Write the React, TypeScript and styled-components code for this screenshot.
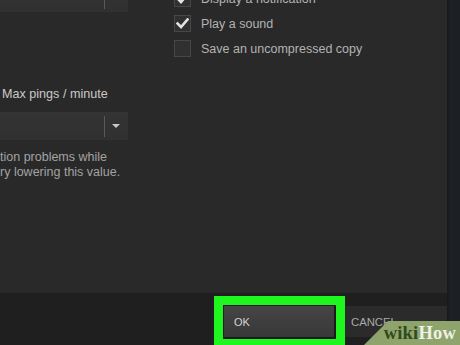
import React from "react";
import styled, { createGlobalStyle } from "styled-components";

const Global = createGlobalStyle`
  html, body { margin: 0; padding: 0; background: #1c1f22; }
  body { width: 460px; height: 345px; overflow: hidden; font-family: "Liberation Sans", Arial, sans-serif; }
`;

const Page = styled.div`
  position: relative;
  display: flex;
  width: 460px;
  height: 345px;
  overflow: hidden;
`;

const Content = styled.div`
  width: 447px;
  display: flex;
  flex-direction: column;
`;

const RightStrip = styled.div`
  flex: 1;
  background: linear-gradient(90deg, #16181a 0px, #1d2125 3px, #1c2024 100%);
`;

const Panel = styled.div`
  height: 293px;
  flex-shrink: 0;
  background: #292929;
  display: flex;
  overflow: hidden;
`;

const LeftCol = styled.div`
  width: 174px;
  display: flex;
  flex-direction: column;
`;

const RightCol = styled.div`
  display: flex;
  flex-direction: column;
  gap: 8px;
  margin-top: -10px;
`;

const Dropdown = styled.div<{ $top: number }>`
  width: 128px;
  height: 28px;
  margin-top: ${(p) => p.$top}px;
  background: linear-gradient(180deg, #343434, #303030);
  display: flex;
  align-items: center;
  justify-content: flex-end;
  box-sizing: border-box;
  padding-right: 8px;
`;

const Separator = styled.div`
  width: 1px;
  height: 21px;
  background: #5a5a5a;
  margin-right: 7px;
`;

const Arrow = styled.div`
  width: 0;
  height: 0;
  border-left: 4px solid transparent;
  border-right: 4px solid transparent;
  border-top: 4px solid #c8c8c8;
`;

const Label = styled.div`
  margin-top: 75px;
  padding-left: 2px;
  font-size: 12.6px;
  line-height: 14px;
  color: #c9c9c9;
  white-space: nowrap;
`;

const Description = styled.div`
  margin-top: 10px;
  font-size: 12.5px;
  line-height: 15px;
  color: #a3a3a3;
  white-space: nowrap;
`;

const CheckRow = styled.div`
  display: flex;
  align-items: center;
  gap: 10px;
  height: 17px;
`;

const Box = styled.div`
  width: 17px;
  height: 17px;
  box-sizing: border-box;
  border: 1px solid #474747;
  background: #303030;
  display: flex;
  align-items: center;
  justify-content: center;
`;

const CheckText = styled.span`
  font-size: 12.5px;
  color: #b3b3b3;
  white-space: nowrap;
`;

const Footer = styled.div`
  flex: 1;
  background: #1f1f1f;
  display: flex;
  justify-content: flex-end;
  align-items: flex-start;
  padding-top: 3px;
`;

const Highlight = styled.div`
  flex-shrink: 0;
  border: 9px solid #1ff51f;
  padding: 1px 2px 2px 1px;
  background: #191919;
`;

const OkButton = styled.div`
  width: 110px;
  height: 31px;
  box-sizing: border-box;
  padding-left: 10px;
  display: flex;
  align-items: center;
  background: linear-gradient(180deg, #454545, #383838);
  color: #d4d4d4;
  font-size: 11px;
`;

const CancelButton = styled.div`
  width: 102px;
  height: 31px;
  margin-top: 10px;
  box-sizing: border-box;
  padding-left: 6px;
  display: flex;
  align-items: center;
  background: #2b2b2b;
  color: #a9a9a9;
  font-size: 11.3px;
`;

const Watermark = styled.div`
  position: absolute;
  right: 0;
  bottom: 0;
  width: 96px;
  height: 24px;
  background: #8ea46c;
  clip-path: polygon(24px 0, 100% 0, 100% 100%, 0 100%);
  display: flex;
  align-items: center;
  justify-content: flex-end;
  padding-right: 4px;
  box-sizing: border-box;
  font-family: "Liberation Serif", "DejaVu Serif", serif;
  font-weight: bold;
  font-size: 18.5px;
  letter-spacing: 0.2px;
`;

const Wiki = styled.span`
  color: #2e4a1e;
`;

const How = styled.span`
  color: #eef1e4;
`;

const Check = () => (
  <svg width="13" height="11" viewBox="0 0 13 11">
    <path d="M1.5 5.5 L5 9 L11.5 1.5" fill="none" stroke="#e2e2e2" strokeWidth="2.6" strokeLinecap="square" />
  </svg>
);

const options = [
  { text: "Display a notification", checked: true },
  { text: "Play a sound", checked: true },
  { text: "Save an uncompressed copy", checked: false },
];

export default function App() {
  return (
    <>
      <Global />
      <Page>
        <Content>
          <Panel>
            <LeftCol>
              <Dropdown $top={-16}>
                <Separator />
                <Arrow />
              </Dropdown>
              <Label>Max pings / minute</Label>
              <Dropdown $top={11}>
                <Separator />
                <Arrow />
              </Dropdown>
              <Description>
                tion problems while
                <br />
                ry lowering this value.
              </Description>
            </LeftCol>
            <RightCol>
              {options.map((o) => (
                <CheckRow key={o.text}>
                  <Box>{o.checked && <Check />}</Box>
                  <CheckText>{o.text}</CheckText>
                </CheckRow>
              ))}
            </RightCol>
          </Panel>
          <Footer>
            <Highlight>
              <OkButton>OK</OkButton>
            </Highlight>
            <CancelButton>CANCEL</CancelButton>
          </Footer>
        </Content>
        <RightStrip />
        <Watermark>
          <Wiki>wiki</Wiki>
          <How>How</How>
        </Watermark>
      </Page>
    </>
  );
}
